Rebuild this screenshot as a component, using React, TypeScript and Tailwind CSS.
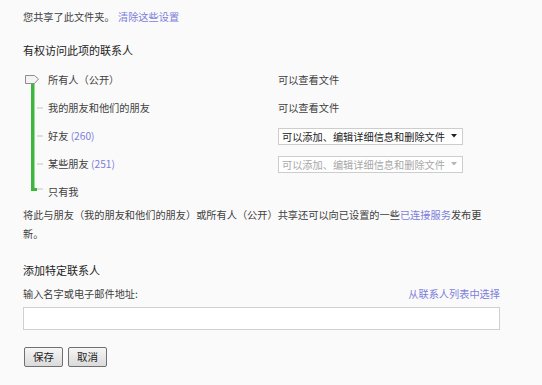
import React from "react";

const link = "text-[#7d7ddc]";

function Select({ disabled }: { disabled?: boolean }) {
  return (
    <div
      className={`flex h-[17px] w-[185px] items-center justify-between border border-[#cdcdcd] bg-white pl-[3px] pr-[5px] text-[10.2px] leading-[15px] ${
        disabled ? "text-[#a8a8a8]" : "text-[#222]"
      }`}
    >
      <span>可以添加、编辑详细信息和删除文件</span>
      <svg width="6" height="4" viewBox="0 0 6 4">
        <polygon points="0,0 6,0 3,3.5" fill={disabled ? "#b5b5b5" : "#222"} />
      </svg>
    </div>
  );
}

function Row({
  children,
  right,
  h = "h-[28px]",
}: {
  children: React.ReactNode;
  right?: React.ReactNode;
  h?: string;
}) {
  return (
    <div className={`flex ${h} items-center`}>
      <div className="w-[230px]">{children}</div>
      <div>{right}</div>
    </div>
  );
}

export default function App() {
  return (
    <div
      className="h-[385px] w-[542px] overflow-hidden bg-[#fafafa] pl-[23px] pt-[10px] text-[10.2px] text-[#3f3f3f] [text-spacing-trim:space-all]"
      style={{ fontFamily: '"Noto Sans CJK SC", "Noto Sans", sans-serif' }}
    >
      <div className="h-[14px] leading-[14px]">
        您共享了此文件夹。 <span className={`ml-[1px] ${link}`}>清除这些设置</span>
      </div>

      <div className="mt-[19px] h-[14px] text-[11px] leading-[14px] text-[#222]">
        有权访问此项的联系人
      </div>

      <div className="mt-[9px] flex">
        <div className="w-[25px]">
          <svg width="25" height="139" viewBox="0 0 25 139">
            <rect x="8" y="16" width="3.5" height="109" fill="#3db63d" />
            <rect x="8" y="122" width="6" height="3" fill="#3db63d" />
            <line x1="14" y1="42" x2="20" y2="42" stroke="#c4c4c4" strokeWidth="1" />
            <line x1="14" y1="70" x2="20" y2="70" stroke="#c4c4c4" strokeWidth="1" />
            <line x1="14" y1="98" x2="20" y2="98" stroke="#c4c4c4" strokeWidth="1" />
            <line x1="14" y1="123" x2="20" y2="123" stroke="#c4c4c4" strokeWidth="1" />
            <polygon
              points="2.5,9.5 11.5,9.5 15.5,13 11.5,17.5 2.5,17.5"
              fill="#f3f3f3"
              stroke="#8e8e8e"
              strokeWidth="1"
            />
          </svg>
        </div>
        <div className="flex flex-col leading-[14px]">
          <Row right={<span>可以查看文件</span>}>所有人（公开）</Row>
          <Row right={<span>可以查看文件</span>}>我的朋友和他们的朋友</Row>
          <Row right={<Select />}>
            好友 <span className={link}>(260)</span>
          </Row>
          <Row right={<Select disabled />}>
            某些朋友 <span className={link}>(251)</span>
          </Row>
          <Row h="h-[27px]">只有我</Row>
        </div>
      </div>

      <p className="w-[475px] leading-[19px]">
        将此与朋友（我的朋友和他们的朋友）或所有人（公开）共享还可以向已设置的一些
        <span className={link}>已连接服务</span>发布更新。
      </p>

      <div className="mt-[20px] h-[14px] text-[11px] leading-[14px] text-[#222]">
        添加特定联系人
      </div>

      <div className="mt-[10px] flex h-[14px] w-[477px] items-center justify-between leading-[14px]">
        <span>输入名字或电子邮件地址:</span>
        <span className={link}>从联系人列表中选择</span>
      </div>

      <div className="mt-[6px] h-[23px] w-[477px] border border-[#d0d0d0] bg-white" />

      <div className="mt-[17px] flex gap-[5px] pl-[1px]">
        <button className="flex h-[20px] w-[39px] items-center justify-center rounded-[2px] border border-[#707070] bg-gradient-to-b from-[#f6f6f6] to-[#dadada] text-[10.5px] leading-[14px] text-[#222]">
          保存
        </button>
        <button className="flex h-[20px] w-[39px] items-center justify-center rounded-[2px] border border-[#707070] bg-gradient-to-b from-[#f6f6f6] to-[#dadada] text-[10.5px] leading-[14px] text-[#222]">
          取消
        </button>
      </div>
    </div>
  );
}
